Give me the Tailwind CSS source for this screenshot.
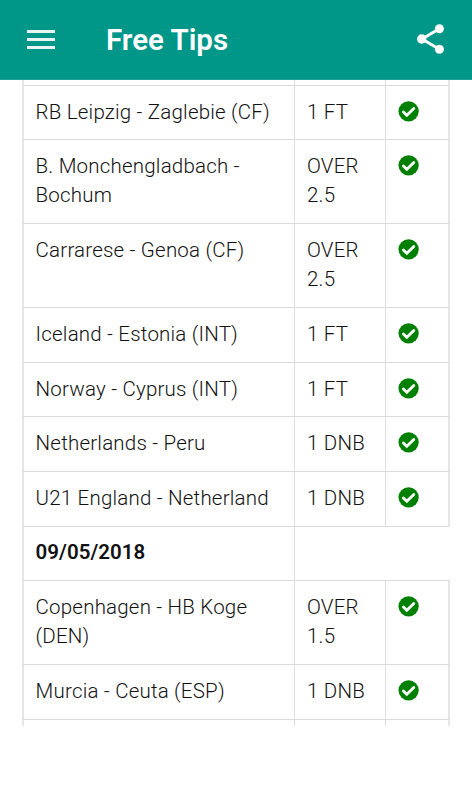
<!DOCTYPE html>
<html lang="en">
<head>
    <meta charset="UTF-8">
    <meta name="viewport" content="width=device-width, initial-scale=1.0">
    <title>Free Tips</title>
    <script src="https://cdn.jsdelivr.net/npm/@tailwindcss/browser@4"></script>
</head>
<body class="bg-white h-[800px] overflow-hidden font-['Roboto',sans-serif] text-[#111111]">

    <!-- App bar -->
    <header class="h-20 bg-[#009688] border-b border-[#259f94] flex items-center text-white">
        <svg class="w-7 h-5 ml-[27px] shrink-0" viewBox="0 0 28 20" fill="#e6f4f3">
            <path d="M0 0h28v3H0zM0 8h28v3H0zM0 16h28v3H0z"/>
        </svg>
        <h1 class="ml-[51px] text-[29.5px] leading-9 font-semibold">Free Tips</h1>
        <svg class="w-[27px] h-[30px] ml-auto mr-[28px] mb-0.5 shrink-0" viewBox="0 0 27 30" fill="white">
            <path d="M22 5 5 15l17 10" fill="none" stroke="white" stroke-width="3"/>
            <circle cx="22.4" cy="4.7" r="4.5"/>
            <circle cx="4.7" cy="15" r="4.7"/>
            <circle cx="22.4" cy="25.3" r="4.5"/>
        </svg>
    </header>

    <!-- Tips table -->
    <main id="tips" class="ml-[22px] w-[428px] h-[646px] overflow-hidden font-light text-[20.5px] leading-[29.4px] tracking-[0.2px]"></main>

    <script>
        // [match, tip, row height class]; a row without a tip is a date heading
        const rows = [
            ['', ' ', 'h-[6px]'],
            ['RB Leipzig - Zaglebie (CF)', '1 FT', 'h-[54px]'],
            ['B. Monchengladbach -<br>Bochum', 'OVER<br>2.5', 'h-[84px]'],
            ['Carrarese - Genoa (CF)', 'OVER<br>2.5', 'h-[84px]'],
            ['Iceland - Estonia (INT)', '1 FT', 'h-[55px]'],
            ['Norway - Cyprus (INT)', '1 FT', 'h-[54px]'],
            ['Netherlands - Peru', '1 DNB', 'h-[55px]'],
            ['U21 England - Netherland', '1 DNB', 'h-[55px]'],
            ['09/05/2018', '', 'h-[54px]'],
            ['Copenhagen - HB Koge<br>(DEN)', 'OVER<br>1.5', 'h-[84px]'],
            ['Murcia - Ceuta (ESP)', '1 DNB', 'h-[55px]'],
            ['', ' ', 'h-[7px]'],
        ];

        const check = `<svg class="w-[21px] h-[21px] mt-[3px]" viewBox="0 0 21 21">
            <circle cx="10.6" cy="10.3" r="10.1" fill="#008000"/>
            <path d="M5.4 11 8.8 14.3 15.8 7.4" fill="none" stroke="white" stroke-width="2.8" stroke-linecap="round"/>
        </svg>`;

        document.getElementById('tips').innerHTML = rows.map(([match, tip, height], i) => {
            // The last row is cut off, so it has no bottom line
            const line = i < rows.length - 1 ? 'border-b border-b-[#dadada]' : '';
            const pad = match ? (tip ? 'pt-3' : 'pt-[11px]') : '';
            const weight = tip ? '' : 'font-semibold tracking-[0.05px]';
            const cells = tip
                ? `<div class="w-[91px] pl-3 border-r border-r-[#dcdcdc] ${line} ${pad}">${tip}</div>
                   <div class="w-[64px] pl-3 border-r-2 border-r-[#e6e6e6] ${line} ${pad}">${match ? check : ''}</div>`
                : `<div class="w-[155px] ${line}"></div>`;
            return `<div class="flex overflow-hidden whitespace-nowrap ${height}">
                <div class="w-[273px] pl-[11.6px] border-l-2 border-l-[#e6e6e6] border-r border-r-[#dcdcdc] ${line} ${pad} ${weight}">${match}</div>
                ${cells}
            </div>`;
        }).join('');
    </script>

</body>
</html>
